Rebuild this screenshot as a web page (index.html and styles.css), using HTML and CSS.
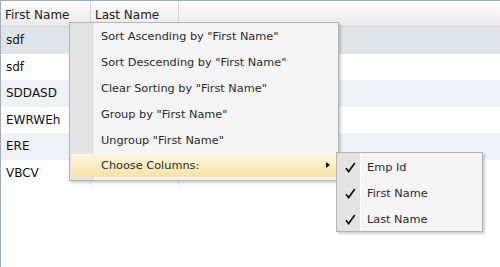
FILE: index.html
```html
<!DOCTYPE html>
<html lang="en">
<head>
    <meta charset="UTF-8">
    <title>Grid context menu</title>
    <link rel="stylesheet" href="styles.css">
</head>
<body>

    <div class="grid">
        <div class="grid-header">
            <div class="cell col-first">First Name</div>
            <div class="cell col-last">Last Name</div>
            <div class="cell col-fill"></div>
        </div>
        <div class="row hover">
            <div class="cell col-first">sdf</div>
            <div class="cell col-last"></div>
            <div class="cell col-fill"></div>
        </div>
        <div class="row">
            <div class="cell col-first">sdf</div>
            <div class="cell col-last"></div>
            <div class="cell col-fill"></div>
        </div>
        <div class="row alt">
            <div class="cell col-first">SDDASD</div>
            <div class="cell col-last"></div>
            <div class="cell col-fill"></div>
        </div>
        <div class="row">
            <div class="cell col-first">EWRWEh</div>
            <div class="cell col-last"></div>
            <div class="cell col-fill"></div>
        </div>
        <div class="row alt">
            <div class="cell col-first">ERE</div>
            <div class="cell col-last"></div>
            <div class="cell col-fill"></div>
        </div>
        <div class="row">
            <div class="cell col-first">VBCV</div>
            <div class="cell col-last"></div>
            <div class="cell col-fill"></div>
        </div>
    </div>

    <!-- context menu over the grid -->
    <div class="menu main-menu">
        <div class="menu-item"><span class="menu-icon"></span><span class="menu-text">Sort Ascending by "First Name"</span></div>
        <div class="menu-item"><span class="menu-icon"></span><span class="menu-text">Sort Descending by "First Name"</span></div>
        <div class="menu-item"><span class="menu-icon"></span><span class="menu-text">Clear Sorting by "First Name"</span></div>
        <div class="menu-item"><span class="menu-icon"></span><span class="menu-text">Group by "First Name"</span></div>
        <div class="menu-item"><span class="menu-icon"></span><span class="menu-text">Ungroup "First Name"</span></div>
        <div class="menu-item active"><span class="menu-icon"></span><span class="menu-text">Choose Columns:</span><span class="arrow"></span></div>
    </div>

    <div class="menu sub-menu">
        <div class="menu-item">
            <span class="menu-icon"><svg width="11" height="11" viewBox="0 0 11 11"><path d="M1 6.2 L3.6 9.5 L9.8 1" fill="none" stroke="#111" stroke-width="1.7"/></svg></span>
            <span class="menu-text">Emp Id</span>
        </div>
        <div class="menu-item">
            <span class="menu-icon"><svg width="11" height="11" viewBox="0 0 11 11"><path d="M1 6.2 L3.6 9.5 L9.8 1" fill="none" stroke="#111" stroke-width="1.7"/></svg></span>
            <span class="menu-text">First Name</span>
        </div>
        <div class="menu-item">
            <span class="menu-icon"><svg width="11" height="11" viewBox="0 0 11 11"><path d="M1 6.2 L3.6 9.5 L9.8 1" fill="none" stroke="#111" stroke-width="1.7"/></svg></span>
            <span class="menu-text">Last Name</span>
        </div>
    </div>

</body>
</html>
```

FILE: styles.css
```css
body {
    margin: 0;
    font-family: "DejaVu Sans", Verdana, sans-serif;
    background: #fff;
    width: 500px;
    height: 267px;
    overflow: hidden;
    position: relative;
}

.grid {
    height: 266px;
    border-top: 1px solid #a3abb6;
    border-left: 1px solid #a3abb6;
}

.grid-header {
    display: flex;
    height: 25px;
    border-bottom: 1px solid #d2d5d9;
    background: linear-gradient(#fbfbfb, #f2f2f2 55%, #e9e9e9);
    color: #222;
    font-size: 12px;
}

.grid-header .cell {
    padding: 7px 0 0 4px;
    border-right: 1px solid #d4d4d4;
}

.cell {
    box-sizing: border-box;
    white-space: nowrap;
}

.col-first { width: 90px; }
.col-last { width: 88px; }
.col-fill { flex: 1; border-right: none !important; }

.row {
    display: flex;
    height: 26.5px;
    font-size: 12px;
    color: #111;
}

.row .cell {
    padding: 6px 0 0 5px;
    border-right: 1px solid #e2e2e2;
}

.row.hover { background: #dfe4eb; }
.row.alt { background: #eef2f7; }

/* --- menus --- */
.menu {
    position: absolute;
    box-sizing: border-box;
    background: #f4f4f4;
    border: 1px solid #b4b4b4;
    box-shadow: 2px 2px 2px rgba(0, 0, 0, 0.18);
    font-size: 11.3px;
    color: #2a2a2a;
}

.main-menu {
    left: 69px;
    top: 22px;
    width: 270px;
    height: 159px;
}

.sub-menu {
    left: 336px;
    top: 152px;
    width: 147px;
    height: 80px;
    padding-top: 1px;
}

.menu::before {
    content: "";
    position: absolute;
    top: 0;
    bottom: 0;
    left: 0;
    width: 24px;
    background: #e3e3e3;
    border-right: 1px solid #fbfbfb;
}

.sub-menu::before { width: 23px; }

.menu-item {
    position: relative;
    display: flex;
    align-items: center;
    height: 26px;
}

.menu-icon {
    width: 26px;
    flex: none;
    display: flex;
    justify-content: center;
}

.main-menu .menu-text { padding-left: 5px; }
.sub-menu .menu-text { padding-left: 4px; }

.menu-item.active {
    margin: 1px 1px 2px 1px;
    height: 23px;
    background: linear-gradient(#fdf6e0, #fcedc0 50%, #f9e3a6);
}

.menu-item.active .menu-icon { width: 25px; }

.arrow {
    position: absolute;
    right: 7px;
    top: 8px;
    width: 0;
    height: 0;
    border-top: 3.5px solid transparent;
    border-bottom: 3.5px solid transparent;
    border-left: 4px solid #111;
}
```
